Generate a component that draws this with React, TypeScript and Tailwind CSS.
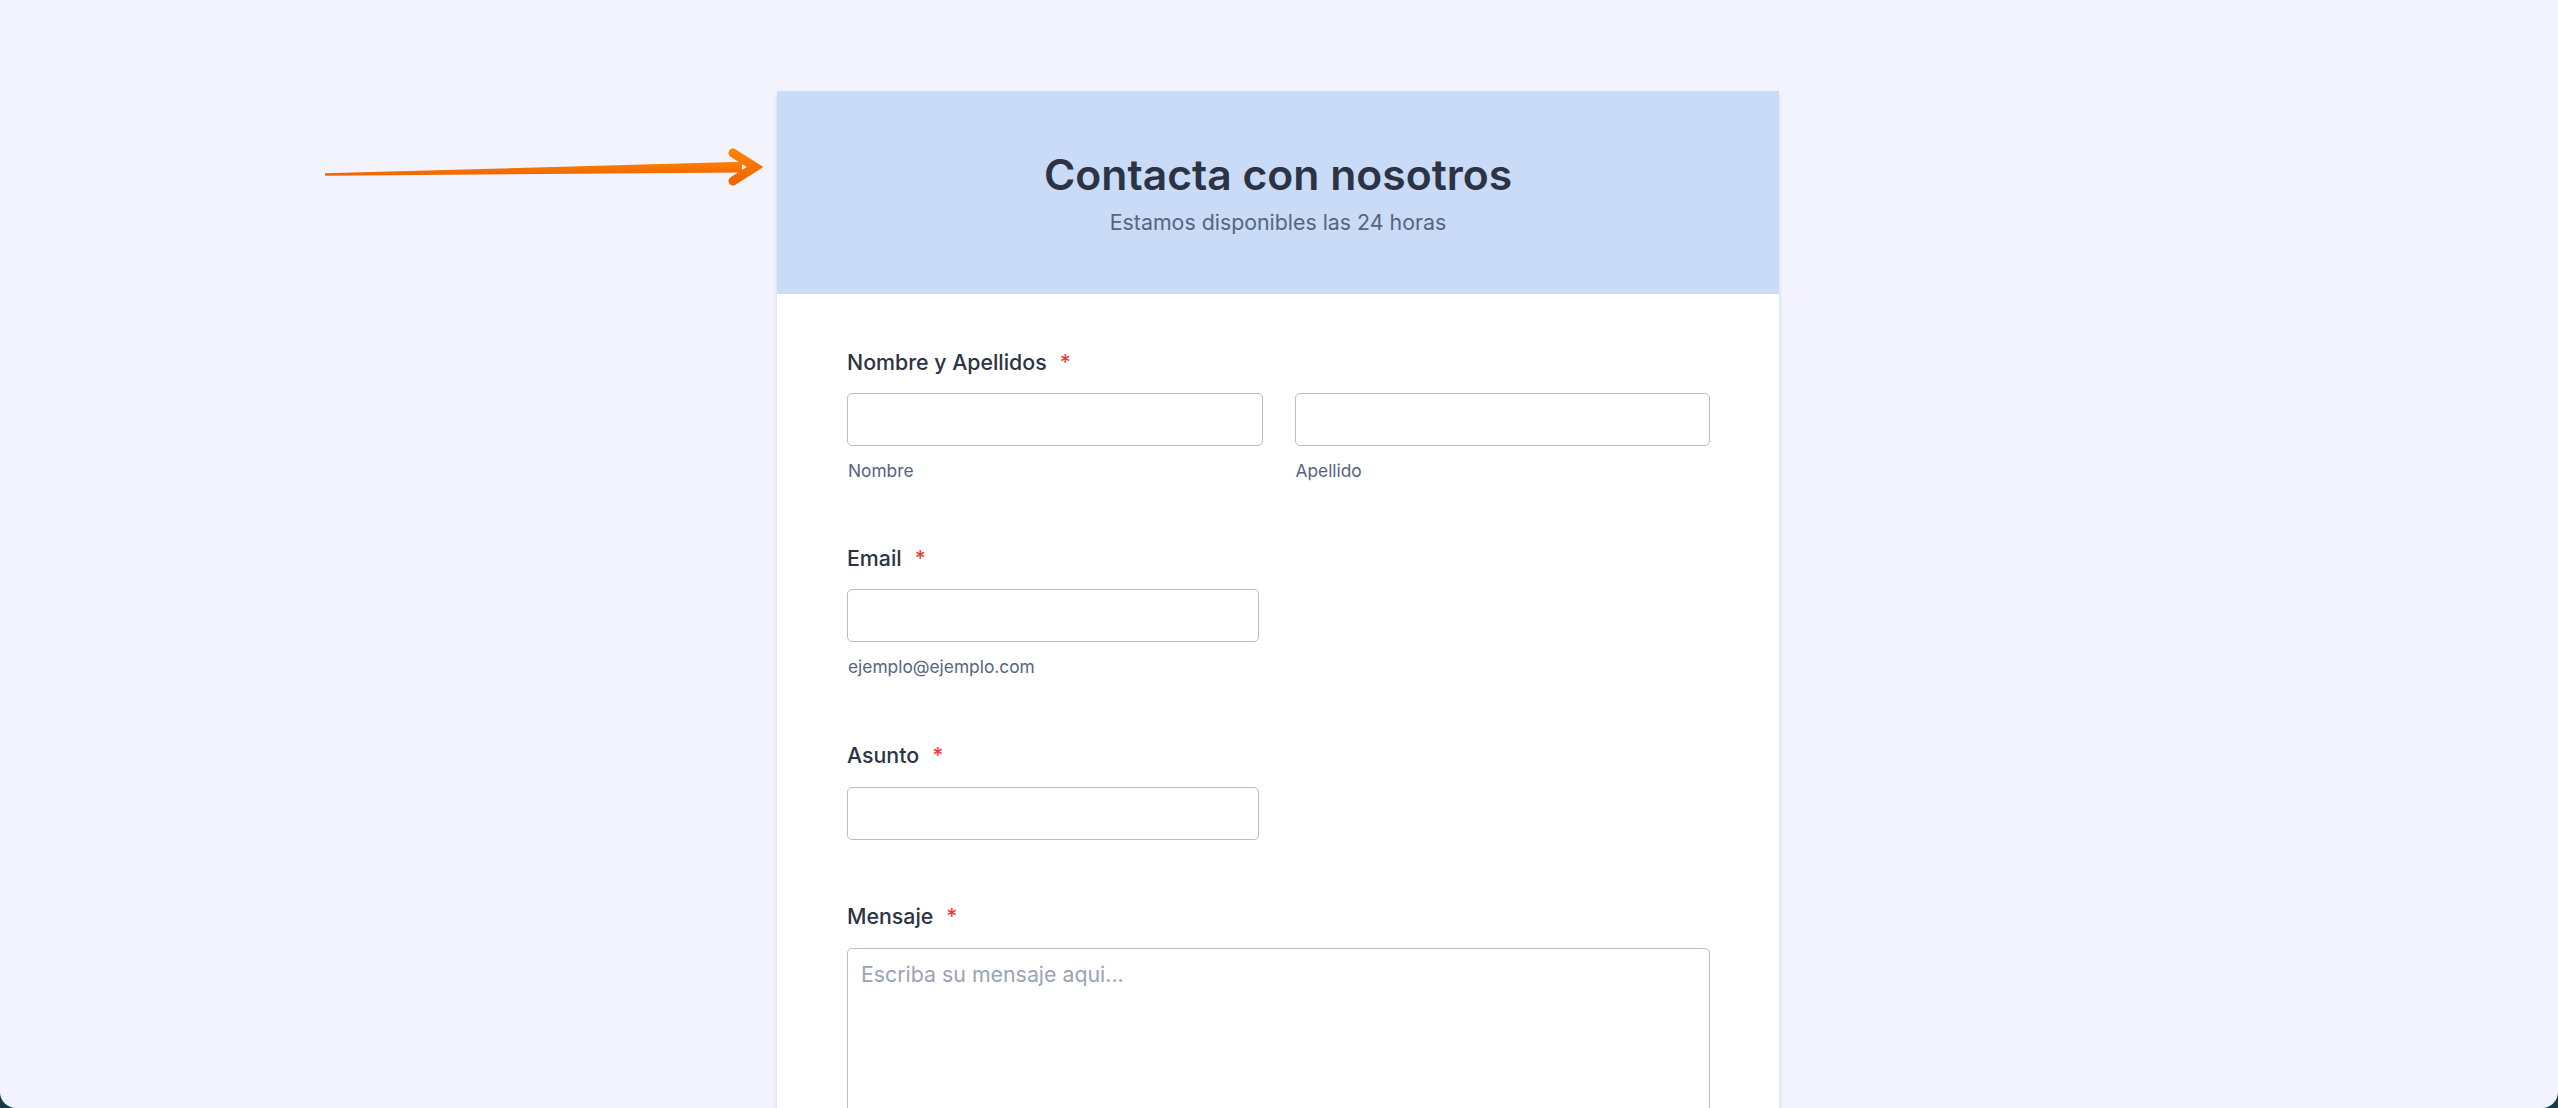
import React from "react";

function Arrow() {
  return (
    <svg
      className="absolute left-[300px] top-[140px] w-[480px] h-[60px]"
      viewBox="300 140 480 60"
      fill="none"
    >
      <defs>
        <linearGradient id="arrowFill" x1="0" y1="0" x2="0" y2="1">
          <stop offset="0" stopColor="#ff8000" />
          <stop offset="1" stopColor="#ee6500" />
        </linearGradient>
      </defs>
      <polygon points="325,173.3 742,161.8 742,172.4 325,175.8" fill="url(#arrowFill)" />
      <path
        d="M733 153 L755 167 L733 181"
        stroke="url(#arrowFill)"
        strokeWidth="9"
        strokeLinecap="round"
        strokeLinejoin="miter"
      />
    </svg>
  );
}

function Label({ text, className = "" }: { text: string; className?: string }) {
  return (
    <div className={`text-[21.33px] leading-[28px] font-medium text-[#2c3345] ${className}`}>
      {text}
      <span className="ml-[13px] text-[#f23a3c]">*</span>
    </div>
  );
}

function Sublabel({ text }: { text: string }) {
  return <div className="mt-[13px] text-[17.33px] leading-[24px] text-[#57647e] pl-[1px]">{text}</div>;
}

function Field({ className = "" }: { className?: string }) {
  return (
    <input
      type="text"
      className={`h-[53px] rounded-[5px] border border-[#b8bdc9] bg-white px-[13px] text-[21.33px] text-[#2c3345] outline-none ${className}`}
    />
  );
}

export default function App() {
  return (
    <div className="h-[1108px] w-full overflow-hidden bg-[#173a45] font-['Inter',sans-serif]">
      <div className="relative h-full w-full overflow-hidden rounded-b-[16px] bg-[#f3f3fe] pt-[91px] pr-[2px]">
        <Arrow />
        <div className="mx-auto w-[1002px] bg-white shadow-[0_4px_4px_rgba(87,100,126,0.21)]">
          <div className="flex flex-col items-center bg-[#c9dbf7] pt-[58px] pb-[58px]">
            <h1 className="text-[42.67px] leading-[52px] font-semibold text-[#2c3345]">Contacta con nosotros</h1>
            <p className="mt-[7px] text-[21.33px] leading-[28px] text-[#57647e]">Estamos disponibles las 24 horas</p>
          </div>

          <div className="pt-[54px] pl-[70px] pr-[69px] pb-[40px]">
            <Label text="Nombre y Apellidos" />
            <div className="mt-[17px] grid grid-cols-2 gap-[32px]">
              <div className="flex flex-col">
                <Field className="w-full" />
                <Sublabel text="Nombre" />
              </div>
              <div className="flex flex-col">
                <Field className="w-full" />
                <Sublabel text="Apellido" />
              </div>
            </div>

            <Label text="Email" className="mt-[61px]" />
            <div className="mt-[17px] flex flex-col">
              <Field className="w-[412px]" />
              <Sublabel text="ejemplo@ejemplo.com" />
            </div>

            <Label text="Asunto" className="mt-[62px]" />
            <div className="mt-[18px]">
              <Field className="w-[412px]" />
            </div>

            <Label text="Mensaje" className="mt-[62px]" />
            <textarea
              className="mt-[18px] block h-[220px] w-full resize-none rounded-[5px] border border-[#b8bdc9] bg-white px-[13px] pt-[11px] text-[21.33px] leading-[28px] text-[#2c3345] outline-none placeholder:text-[#9aa3b6]"
              placeholder="Escriba su mensaje aqui..."
            />
          </div>
        </div>
      </div>
    </div>
  );
}
